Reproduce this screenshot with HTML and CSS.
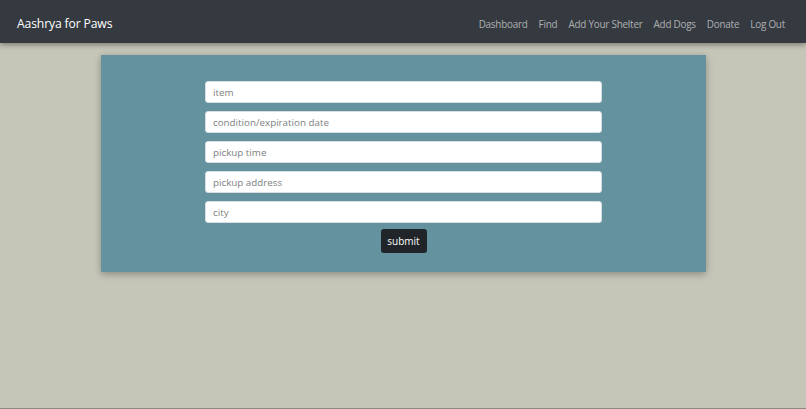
FILE: index.html
```html
<!DOCTYPE html>
<html>
<head>
<meta charset="utf-8">
<link rel="stylesheet" href="styles.css">
</head>
<body>
<nav class="navbar">
  <a class="brand" href="#">Aashrya for Paws</a>
  <ul class="nav-links">
    <li><a href="#">Dashboard</a></li>
    <li><a href="#">Find</a></li>
    <li><a href="#">Add Your Shelter</a></li>
    <li><a href="#">Add Dogs</a></li>
    <li><a href="#">Donate</a></li>
    <li><a href="#">Log Out</a></li>
  </ul>
</nav>
<main class="main">
  <section class="card">
    <form class="form">
      <input class="field" type="text" placeholder="item">
      <input class="field" type="text" placeholder="condition/expiration date">
      <input class="field" type="text" placeholder="pickup time">
      <input class="field" type="text" placeholder="pickup address">
      <input class="field" type="text" placeholder="city">
      <button class="submit" type="button">submit</button>
    </form>
  </section>
</main>
<div class="bottom-line"></div>
</body>
</html>
```
FILE: styles.css
```css
* { box-sizing: border-box; }
html, body { height: 100%; }
body {
  margin: 0;
  background: #c5c5b8;
  font-family: "Open Sans", "Noto Sans", sans-serif;
  display: flex;
  flex-direction: column;
}
.navbar {
  height: 43px;
  flex: none;
  background: #343a40;
  display: flex;
  align-items: baseline;
  justify-content: space-between;
  padding: 11px 21px 0 17px;
  box-shadow: 0 2px 5px rgba(0,0,0,0.35);
  position: relative;
  z-index: 2;
}
.brand {
  color: #ffffff;
  text-decoration: none;
  font-size: 12.2px;
  letter-spacing: -0.15px;
}
.nav-links {
  list-style: none;
  margin: 0;
  padding: 0;
  display: flex;
  align-items: baseline;
  gap: 11px;
}
.nav-links a {
  color: rgba(255,255,255,0.6);
  text-decoration: none;
  font-size: 9.9px;
  letter-spacing: -0.22px;
}
.main {
  flex: 1;
  padding-top: 12px;
  display: flex;
  justify-content: center;
}
.card {
  width: 605px;
  height: 217px;
  margin-left: 1px;
  background: #64939f;
  box-shadow: 0 2px 7px rgba(0,0,0,0.3);
  padding-top: 26px;
}
.form {
  width: 397px;
  margin: 0 auto;
  display: flex;
  flex-direction: column;
  align-items: center;
  gap: 8px;
}
.field {
  width: 100%;
  height: 22px;
  border: 1px solid #d8dde1;
  border-radius: 3px;
  background: #fff;
  padding: 0 7px;
  font-family: inherit;
  font-size: 9.8px;
  color: #495057;
}
.field::placeholder { color: #7c7f82; }
.submit {
  margin-top: -2px;
  width: 46px;
  height: 24px;
  background: #212529;
  color: #fff;
  border: none;
  border-radius: 3px;
  font-family: inherit;
  font-size: 10px;
  padding: 0;
}
.bottom-line {
  height: 1px;
  flex: none;
  background: #8a8a80;
}
```
